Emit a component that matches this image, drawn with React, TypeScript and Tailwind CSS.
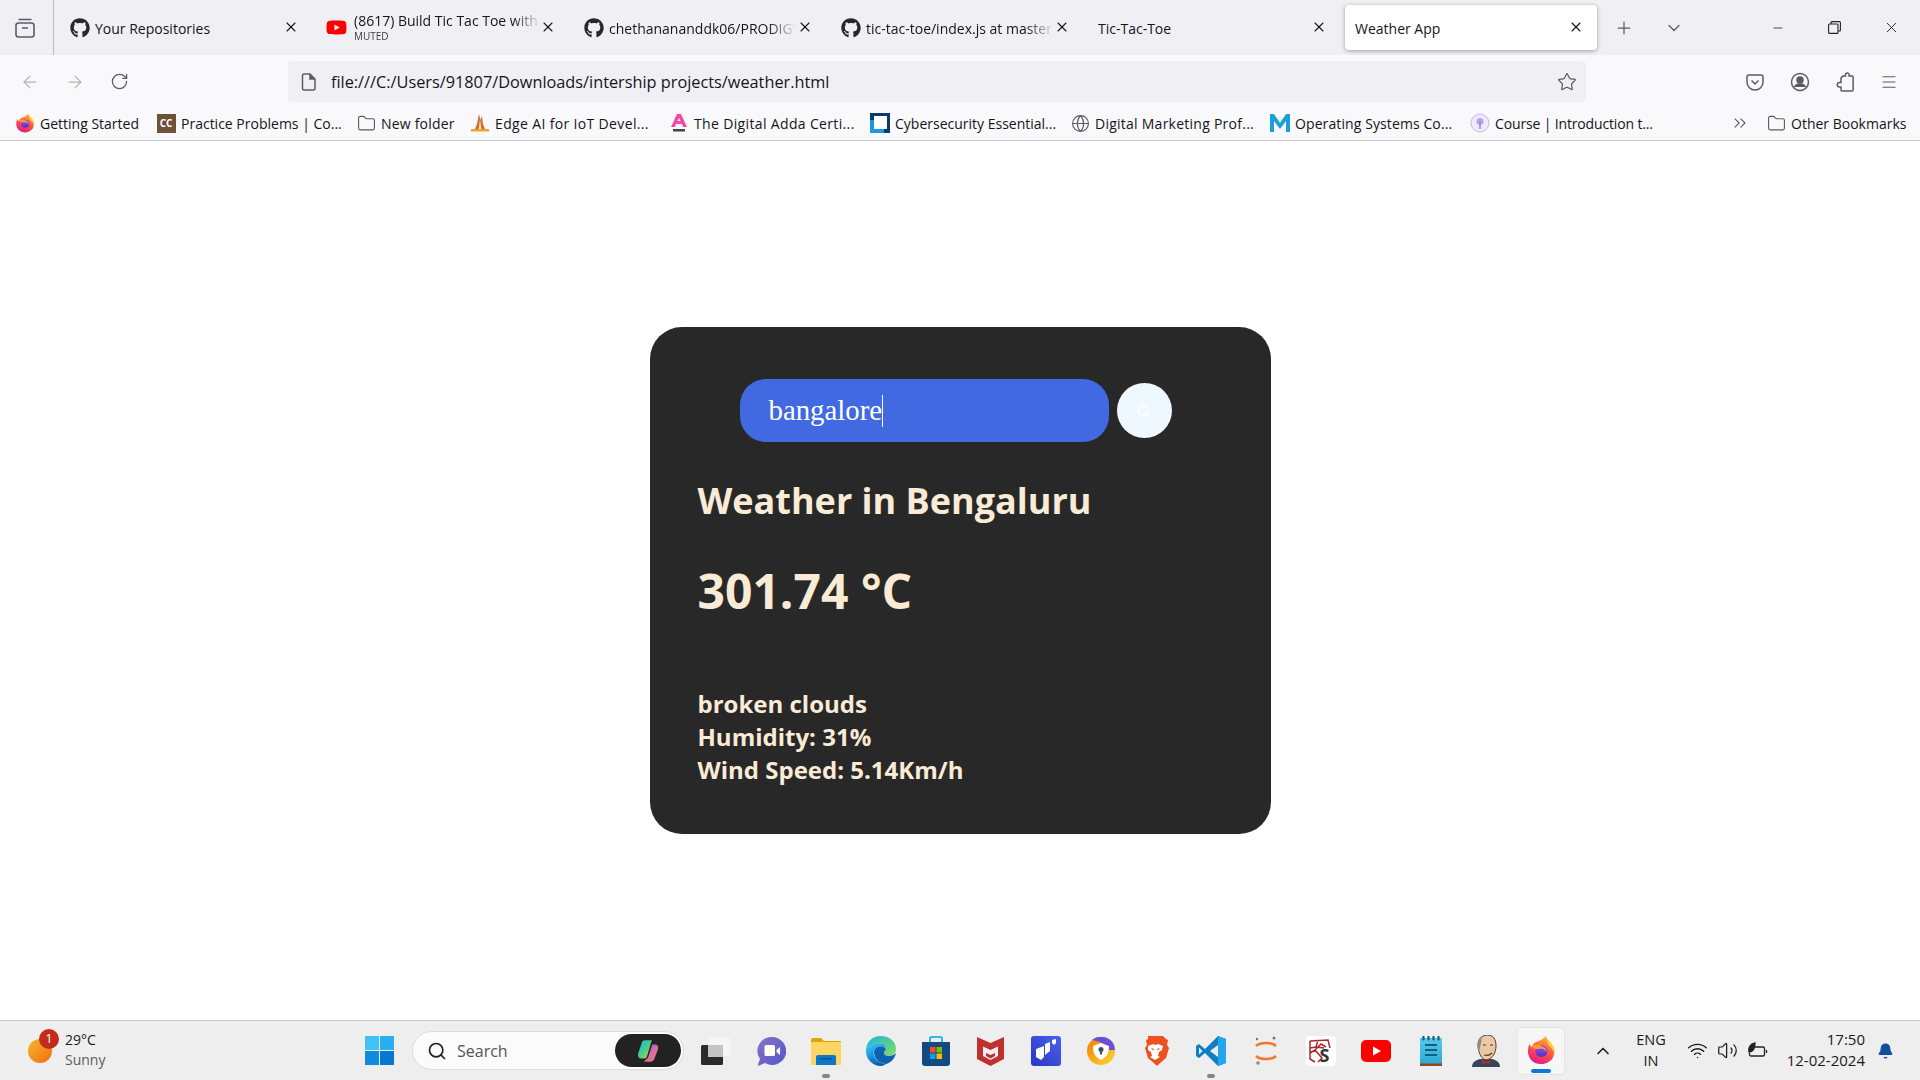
import { ArrowLeft, ArrowRight, RotateCw, Star, Menu, Folder, Globe, ChevronsRight, Search, ChevronUp, X, Minus, Plus, ChevronDown, Volume2, Wifi, Bell } from 'lucide-react';
import { FaGithub, FaYoutube } from 'react-icons/fa';
import { ReactNode } from 'react';

/* browser chrome data */
const tabs = [
  { title: 'Your Repositories', icon: 'github', textW: 'w-[180px]', fade: false },
  { title: '(8617) Build Tic Tac Toe with JavaScript', icon: 'youtube', textW: 'w-[187px]', fade: true, muted: true },
  { title: 'chethanananddk06/PRODIGY_WD_03', icon: 'github', textW: 'w-[187px]', fade: true },
  { title: 'tic-tac-toe/index.js at master', icon: 'github', textW: 'w-[188px]', fade: true },
  { title: 'Tic-Tac-Toe', icon: '', textW: 'w-[180px]', fade: false },
];

function FirefoxIcon({ size = 20, id }: { size?: number; id: string }) {
  return (
    <svg width={size} height={size} viewBox="0 0 32 32">
      <defs>
        <linearGradient id={`${id}a`} x1="0.7" y1="0" x2="0.3" y2="1">
          <stop offset="0" stopColor="#ffbd2e" />
          <stop offset="0.45" stopColor="#ff5f3a" />
          <stop offset="1" stopColor="#e31587" />
        </linearGradient>
        <linearGradient id={`${id}b`} x1="0.5" y1="0" x2="0.5" y2="1">
          <stop offset="0" stopColor="#9059ff" />
          <stop offset="1" stopColor="#5b2bc4" />
        </linearGradient>
      </defs>
      <path d="M21 1c1 3 3 5 6 8 3 4 4 8 3 11-1 7-7 11-14 11C8 31 2 25 2 17c0-3 1-6 2-8 0 2 1 3 2 4 1-3 3-5 6-6 3-1 7-3 9-6z" fill={`url(#${id}a)`} />
      <path d="M21 1c1 3 3 5 6 8 3 4 4 8 3 11-1-4-3-7-6-9-1-4-2-7-3-10z" fill="#ffd02e" />
      <circle cx="16.500" cy="17" r="6.500" fill={`url(#${id}b)`} />
      <path d="M6 12c3-2 8-2 11 0 3 1 5 3 5 6-2-3-5-4-8-3-3 0-6 0-8-3z" fill="#ff9a2e" />
    </svg>
  );
}

function TaskSlot({ children }: { children: ReactNode }) {
  return <div className="w-[55px] h-[59px] flex items-center justify-center relative">{children}</div>;
}

function Dot() {
  return <div className="absolute left-1/2 -translate-x-1/2 bottom-[2px] w-[8px] h-[4px] rounded-full bg-[#858585]" />;
}

function Bookmark({ icon, label, className, labelClass = '' }: { icon: ReactNode; label: string; className: string; labelClass?: string }) {
  return (
    <div className={`flex items-center shrink-0 ${className}`}>
      <div className="w-[20px] h-[20px] flex items-center justify-center shrink-0">{icon}</div>
      <span className={`ml-[5px] whitespace-nowrap ${labelClass}`}>{label}</span>
    </div>
  );
}

export default function App() {
  return (
    <div className="w-[1920px] h-[1080px] flex flex-col bg-white overflow-hidden font-['Open_Sans',sans-serif]">
      {/* Tab strip */}
      <div className="h-[55px] bg-[#f0f0f4] flex items-center text-[14px] text-[#15141a] shrink-0">
        <div className="w-[54px] h-[55px] border-r border-[#bcbcc2] pl-[15px] flex items-center shrink-0">
          <svg width="20" height="20" viewBox="0 0 20 20" fill="none" stroke="#5b5b66" strokeWidth="1.6">
            <rect x="1" y="5" width="18" height="14" rx="2.500" />
            <path d="M3.500 1.500h13M7 10h6" />
          </svg>
        </div>
        <div className="w-[6px]" />
        {tabs.map((tab) => (
          <div key={tab.title} className="w-[257px] h-[55px] pl-[10px] flex items-center relative shrink-0">
            {tab.icon === 'github' && <FaGithub className="w-[20px] h-[20px] text-[#24292f] mr-[5px] shrink-0" />}
            {tab.icon === 'youtube' && <FaYoutube className="w-[21px] h-[21px] text-[#f00] -ml-[1px] mr-[7px] shrink-0" />}
            {tab.muted ? (
              <div className={`${tab.textW} overflow-hidden -mt-[2px] [mask-image:linear-gradient(to_right,black_85%,transparent)]`}>
                <div className="whitespace-nowrap leading-[19px]">{tab.title}</div>
                <div className="text-[10px] leading-[13px] text-[#3b3b42]">MUTED</div>
              </div>
            ) : (
              <div className={`${tab.textW} mt-[2px] overflow-hidden whitespace-nowrap ${tab.fade ? '[mask-image:linear-gradient(to_right,black_85%,transparent)]' : ''}`}>
                {tab.title}
              </div>
            )}
            <X className="absolute left-[223px] top-[19px] w-[16px] h-[16px] text-[#15141a]" strokeWidth={1.6} />
          </div>
        ))}
        {/* active tab */}
        <div className="w-[252px] h-[45px] bg-white rounded-[4px] shadow-[0_1px_4px_rgba(0,0,0,0.35)] pl-[10px] flex items-center relative shrink-0">
          <span className="mt-[2px]">Weather App</span>
          <X className="absolute left-[223px] top-[14px] w-[16px] h-[16px]" strokeWidth={1.6} />
        </div>
        <Plus className="ml-[17px] w-[20px] h-[20px] text-[#5b5b66]" strokeWidth={1.5} />
        <ChevronDown className="ml-[30px] w-[20px] h-[20px] text-[#5b5b66]" strokeWidth={1.5} />
        <Minus className="ml-[87px] w-[14px] h-[14px] text-[#222]" strokeWidth={1.4} />
        <svg className="ml-[43px]" width="13" height="13" viewBox="0 0 13 13" fill="none" stroke="#222" strokeWidth="1.100">
          <rect x="0.600" y="3" width="9.400" height="9.400" rx="1" />
          <path d="M3 3V1.600a1 1 0 0 1 1-1h7.400a1 1 0 0 1 1 1V9a1 1 0 0 1-1 1H10" />
        </svg>
        <X className="ml-[42px] w-[17px] h-[17px] text-[#222]" strokeWidth={1.3} />
      </div>

      {/* Nav toolbar */}
      <div className="h-[53px] bg-[#f9f9fb] flex items-center shrink-0 text-[#5b5b66]">
        <ArrowLeft className="ml-[20px] w-[20px] h-[20px] text-[#b4b4b9]" strokeWidth={1.5} />
        <ArrowRight className="ml-[25px] w-[20px] h-[20px] text-[#b4b4b9]" strokeWidth={1.5} />
        <RotateCw className="ml-[25px] w-[19px] h-[19px]" strokeWidth={1.6} />
        <div className="ml-[159px] w-[1298px] h-[41px] bg-[#f0f0f4] rounded-[4px] flex items-center relative">
          <svg className="ml-[13px]" width="16" height="18" viewBox="0 0 16 18" fill="none" stroke="#5b5b66" strokeWidth="1.500">
            <path d="M3 1h6l5 5v9.500a1.500 1.500 0 0 1-1.500 1.500h-9.500A1.500 1.500 0 0 1 1.500 15.500v-13A1.500 1.500 0 0 1 3 1z" />
            <path d="M9 1v5h5" fill="#5b5b66" />
          </svg>
          <span className="ml-[14px] mt-[2px] text-[16.300px] text-[#15141a] whitespace-nowrap">file:///C:/Users/91807/Downloads/intership projects/weather.html</span>
          <Star className="absolute right-[9px] top-[11px] w-[20px] h-[20px]" strokeWidth={1.5} />
        </div>
        <svg className="ml-[160px]" width="18" height="18" viewBox="0 0 18 18" fill="none" stroke="#5b5b66" strokeWidth="1.500">
          <path d="M3 2h12a2 2 0 0 1 2 2v5a8 8 0 0 1-16 0V4a2 2 0 0 1 2-2z" />
          <path d="M5.500 7.500 9 11l3.500-3.500" />
        </svg>
        <svg className="ml-[26px]" width="20" height="20" viewBox="0 0 20 20" fill="none" stroke="#5b5b66" strokeWidth="1.500">
          <circle cx="10" cy="10" r="8.500" />
          <circle cx="10" cy="8" r="3" fill="#5b5b66" />
          <path d="M4.500 15c1-2 3-3 5.500-3s4.500 1 5.500 3" fill="#5b5b66" />
        </svg>
        <svg className="ml-[26px]" width="18" height="20" viewBox="0 0 18 20" fill="none" stroke="#5b5b66" strokeWidth="1.500">
          <path d="M7 4h2.500V2.800a1.800 1.800 0 0 1 3.600 0V4h3a1 1 0 0 1 1 1v13a1 1 0 0 1-1 1H6a1 1 0 0 1-1-1v-3H3.500a2 2 0 0 1 0-4.500H5V8a4 4 0 0 1 2-4z" />
        </svg>
        <Menu className="ml-[26px] w-[18px] h-[18px]" strokeWidth={1.5} />
      </div>

      {/* Bookmarks */}
      <div className="h-[33px] bg-[#f9f9fb] border-b border-[#c8c8cc] pb-[2px] flex items-center text-[14px] text-[#15141a] shrink-0 relative">
        <div className="flex items-center pl-[15px]">
          <Bookmark className="w-[141px]" icon={<FirefoxIcon id="bm" />} label="Getting Started" />
          <Bookmark className="w-[200px]" label="Practice Problems | Co..." icon={
            <div className="w-[19px] h-[19px] bg-[#6f5138] flex items-center justify-center text-white text-[10px] font-bold">CC</div>
          } />
          <Bookmark className="w-[114px]" labelClass="tracking-[0.2px]" icon={<Folder className="w-[19px] h-[19px] text-[#5b5b66]" strokeWidth={1.4} />} label="New folder" />
          <Bookmark className="w-[199px]" labelClass="tracking-[0.35px]" label="Edge AI for IoT Devel..." icon={
            <svg width="20" height="20" viewBox="0 0 20 20">
              <path d="M9 1l1.500 6 1.500-4 1 8 2 5H5l2-5z" fill="#c9742a" />
              <path d="M10 6l1 10H9z" fill="#fff" />
              <rect x="1" y="16" width="18" height="2.500" fill="#f0a030" />
            </svg>
          } />
          <Bookmark className="w-[201px]" labelClass="tracking-[0.35px]" label="The Digital Adda Certi..." icon={
            <svg width="20" height="20" viewBox="0 0 20 20">
              <path d="M8 1h4l6 13h-4l-1-3H7l-1 3H2z" fill="#f04aa5" />
              <path d="M8.500 8h3L10 5z" fill="#fff" />
              <rect x="4" y="16" width="12" height="2.500" fill="#444" />
            </svg>
          } />
          <Bookmark className="w-[200px]" label="Cybersecurity Essential..." icon={
            <svg width="20" height="20" viewBox="0 0 20 20">
              <rect width="20" height="20" fill="#0b3a6f" />
              <rect x="4" y="3" width="13" height="13" fill="#fff" />
              <path d="M0 7h4v9h10v4H0z" fill="#1c9ad6" />
            </svg>
          } />
          <Bookmark className="w-[200px]" labelClass="tracking-[0.25px]" icon={<Globe className="w-[19px] h-[19px] text-[#5b5b66]" strokeWidth={1.4} />} label="Digital Marketing Prof..." />
          <Bookmark className="w-[200px]" labelClass="tracking-[0.1px]" label="Operating Systems Co..." icon={
            <svg width="20" height="20" viewBox="0 0 20 20">
              <path d="M0 19V1h4l6 9 6-9h4v18h-4V8l-6 8-6-8v11z" fill="#1a9fd8" />
            </svg>
          } />
          <Bookmark className="w-[200px]" labelClass="tracking-[-0.15px]" label="Course | Introduction t..." icon={
            <svg width="20" height="20" viewBox="0 0 20 20">
              <circle cx="10" cy="10" r="9" fill="#efe8ff" stroke="#c9b8f0" />
              <circle cx="10" cy="8.500" r="3.500" fill="#b9a5e6" />
              <path d="M10 8v8" stroke="#9d86d8" strokeWidth="1.500" />
            </svg>
          } />
        </div>
        <ChevronsRight className="absolute left-[1730px] top-[5px] w-[20px] h-[20px] text-[#5b5b66]" strokeWidth={1.3} />
        <div className="absolute left-[1766px] top-[5px]">
          <Bookmark className="" icon={<Folder className="w-[19px] h-[19px] text-[#5b5b66]" strokeWidth={1.4} />} label="Other Bookmarks" />
        </div>
      </div>

      {/* Page */}
      <div className="flex-1 bg-white flex items-center justify-center">
        <div className="w-[621px] h-[507px] rounded-[32px] bg-[#282828] px-[48px] pt-[52px] text-[#faebd7] font-bold">
          <div className="flex items-center ml-[42px] gap-[8px]">
            <div className="w-[369px] h-[63px] rounded-[26px] bg-[#4169e1] pl-[29px] flex items-center">
              <span className="font-['Liberation_Serif',serif] font-normal text-[28.800px] text-white">bangalore</span>
              <span className="w-px h-[32px] bg-white" />
            </div>
            <div className="w-[55px] h-[55px] rounded-full bg-[#f0f8ff] flex items-center justify-center">
              <Search className="w-[14px] h-[14px] text-white" strokeWidth={2.500} />
            </div>
          </div>
          <h1 className="mt-[35px] text-[36px] leading-[48px]">Weather in Bengaluru</h1>
          <div className="mt-[34px] text-[48px] leading-[63px]">301.74 °C</div>
          <div className="mt-[65px] text-[24px] leading-[33px]">
            <div>broken clouds</div>
            <div>Humidity: 31%</div>
            <div>Wind Speed: 5.14Km/h</div>
          </div>
        </div>
      </div>

      {/* Taskbar */}
      <div className="h-[60px] bg-[#eeeeee] border-t border-[#c8c8c8] flex items-center shrink-0 text-[14px] text-[#1a1a1a] relative">
        <div className="ml-[28px] w-[24px] h-[24px] rounded-full bg-gradient-to-br from-[#f5b62a] to-[#f06a10] relative shrink-0">
          <div className="absolute -top-[10px] left-[11px] w-[20px] h-[20px] rounded-full bg-[#c42b1c] text-white text-[13px] flex items-center justify-center">1</div>
        </div>
        <div className="ml-[13px] -mt-[2px] w-[60px] leading-[20px] shrink-0">
          <div>29°C</div>
          <div className="text-[#5d5d5d]">Sunny</div>
        </div>
        <div className="ml-[240px] grid grid-cols-2 gap-[1px] w-[29px] h-[29px] shrink-0">
          <div className="bg-[#3ec3f5]" />
          <div className="bg-[#2aaeee]" />
          <div className="bg-[#0f8ae0]" />
          <div className="bg-[#0678d4]" />
        </div>
        <div className="ml-[18px] w-[272px] h-[39px] rounded-full bg-[#fbfbfb] border border-[#dcdcdc] flex items-center pl-[14px] shrink-0">
          <Search className="w-[20px] h-[20px] text-[#222]" strokeWidth={2} />
          <span className="ml-[10px] text-[16px] text-[#555]">Search</span>
          <div className="ml-auto mr-[2px] w-[66px] h-[33px] rounded-full bg-[#222] flex items-center justify-center">
            <svg width="26" height="26" viewBox="0 0 24 24">
              <defs>
                <linearGradient id="cop1" x1="0" y1="0" x2="1" y2="1">
                  <stop offset="0" stopColor="#1fb5ee" />
                  <stop offset="0.5" stopColor="#3fd08a" />
                  <stop offset="1" stopColor="#ffc02e" />
                </linearGradient>
                <linearGradient id="cop2" x1="0" y1="0" x2="1" y2="1">
                  <stop offset="0" stopColor="#a45ee5" />
                  <stop offset="1" stopColor="#ff7a6a" />
                </linearGradient>
              </defs>
              <path d="M16 6h2.500c2.500 0 3.500 2.500 2.500 5l-3 8c-1 2-2 3-4 3H8l4-4z" fill="url(#cop2)" />
              <path d="M9 2h6.500L11 17c-.5 1.500-1.500 2-3 2H6c-3 0-3.500-3-3-5l3-9c.5-2 1.500-3 3-3z" fill="url(#cop1)" />
            </svg>
          </div>
        </div>
        {/* pinned apps */}
        <div className="ml-[4px] flex items-center shrink-0">
          <TaskSlot>
            <svg width="30" height="28" viewBox="0 0 30 28">
              <rect x="7" y="0" width="23" height="20" rx="1.500" fill="#f5f5f5" stroke="#e0e0e0" strokeWidth="0.500" />
              <rect x="0" y="8" width="22" height="20" rx="1.500" fill="#2b2b2b" />
              <rect x="7" y="8" width="15" height="12" fill="#c4c4c4" />
            </svg>
          </TaskSlot>
          <TaskSlot>
            <svg width="30" height="30" viewBox="0 0 30 30">
              <defs>
                <linearGradient id="mt1" x1="0" y1="0" x2="1" y2="1">
                  <stop offset="0" stopColor="#8a70c8" />
                  <stop offset="1" stopColor="#5058c8" />
                </linearGradient>
              </defs>
              <path d="M16 1a14 14 0 1 1-7 26l-6 2.500c-1 .3-1.300-.3-1-1l2-5.500A14 14 0 0 1 16 1z" fill="url(#mt1)" />
              <rect x="8.500" y="9" width="10.500" height="11" rx="1.500" fill="#fff" />
              <path d="M20.500 14l3.500-3v8l-3.500-3z" fill="#fff" />
            </svg>
          </TaskSlot>
          <TaskSlot>
            <svg width="30" height="28" viewBox="0 0 30 28">
              <path d="M0 3a2 2 0 0 1 2-2h8l3 3h17v24H0z" fill="#e0a400" />
              <rect x="0" y="5" width="30" height="23" fill="#fcd660" />
              <path d="M5 20a2 2 0 0 1 2-2h16a2 2 0 0 1 2 2v8H5z" fill="#0d78c8" />
              <rect x="9" y="21" width="12" height="1.500" fill="#0a4f8a" />
            </svg>
            <Dot />
          </TaskSlot>
          <TaskSlot>
            <svg width="30" height="30" viewBox="0 0 30 30">
              <defs>
                <linearGradient id="edge1" x1="0.2" y1="0.1" x2="0.6" y2="1">
                  <stop offset="0" stopColor="#35c1f1" />
                  <stop offset="0.6" stopColor="#1284d8" />
                  <stop offset="1" stopColor="#0c59a4" />
                </linearGradient>
                <linearGradient id="edge2" x1="0" y1="0" x2="1" y2="1">
                  <stop offset="0" stopColor="#1fb6d6" />
                  <stop offset="1" stopColor="#7fe060" />
                </linearGradient>
              </defs>
              <path d="M15 0c9 0 15 6 15 13 0 4-3 7-7 7-3 0-5-1-5-3 0-1 2-2 2-4 0-3-3-6-8-6C7 7 2 10 0 15 0 6 6 0 15 0z" fill="url(#edge2)" />
              <path d="M0 15c0-5 5-8 12-8 5 0 8 3 8 6-2-2-5-3-8-2-3 1-5 4-4 8 1 5 6 9 12 9-2 1-3 2-5 2C6 30 0 23 0 15z" fill="url(#edge1)" />
              <path d="M8 17c0-3 2-6 4-6 3-1 6 0 8 2 0 1-2 2-2 4 0 2 2 3 5 3s5-1 7-3c-1 5-5 10-10 11-6 0-11-4-12-11z" fill="#0c63b0" />
            </svg>
          </TaskSlot>
          <TaskSlot>
            <svg width="30" height="30" viewBox="0 0 30 30">
              <path d="M9 6V2.500A1.500 1.500 0 0 1 10.500 1h9A1.500 1.500 0 0 1 21 2.500V6" fill="none" stroke="#30b5ee" strokeWidth="2" />
              <path d="M1 6h28v21a3 3 0 0 1-3 3H4a3 3 0 0 1-3-3z" fill="#134a80" />
              <rect x="9" y="11" width="5.500" height="5.500" fill="#f25022" />
              <rect x="15.500" y="11" width="5.500" height="5.500" fill="#7fba00" />
              <rect x="9" y="17.500" width="5.500" height="5.500" fill="#00a4ef" />
              <rect x="15.500" y="17.500" width="5.500" height="5.500" fill="#ffb900" />
            </svg>
          </TaskSlot>
          <TaskSlot>
            <svg width="27" height="30" viewBox="0 0 27 30">
              <path d="M0 1l13.500 6L27 1v22L13.500 30 0 23z" fill="#c0302d" />
              <path d="M6 10.500l7.500 3.500L21 10.500V20l-7.500 4L6 20z" fill="#eeeeee" />
              <path d="M9 17l4.500 2 4.500-2v3l-4.500 2.500L9 20z" fill="#c0302d" />
            </svg>
          </TaskSlot>
          <TaskSlot>
            <svg width="30" height="30" viewBox="0 0 30 30">
              <defs>
                <linearGradient id="ln1" x1="0" y1="1" x2="1" y2="0">
                  <stop offset="0" stopColor="#2a35c4" />
                  <stop offset="1" stopColor="#4a62ee" />
                </linearGradient>
              </defs>
              <rect width="30" height="30" rx="3" fill="url(#ln1)" />
              <path d="M5 13l8-3v11l-3 3-5-3z" fill="#fff" />
              <path d="M14 8l5-2v9l-5 4z" fill="#fff" />
              <path d="M21 4l4-1v4l-2 2-2-2z" fill="#fff" />
            </svg>
          </TaskSlot>
          <TaskSlot>
            <svg width="28" height="28" viewBox="0 0 28 28">
              <defs>
                <linearGradient id="av1" x1="0" y1="0" x2="1" y2="1">
                  <stop offset="0" stopColor="#f57c00" />
                  <stop offset="1" stopColor="#fdd835" />
                </linearGradient>
              </defs>
              <circle cx="14" cy="14" r="14" fill="url(#av1)" />
              <path d="M5 3a14 14 0 0 1 23 10h-7C19 7 12 4 5 3z" fill="#6b4fd8" />
              <path d="M6 9c3-1 5-2 8-3 3 1 5 2 8 3 0 7-2 11-8 14-6-3-8-7-8-14z" fill="#fff" />
              <circle cx="14" cy="12.500" r="2.500" fill="#3d4a5c" />
              <rect x="13" y="13" width="2" height="4.500" fill="#3d4a5c" />
            </svg>
          </TaskSlot>
          <TaskSlot>
            <svg width="27" height="30" viewBox="0 0 27 30">
              <path d="M6 0h15l3 3 2 1-1 5 2 3-3 10-7 6-2 2-2-2-7-6-3-10 2-3-1-5 2-1z" fill="#f0501f" />
              <path d="M6 10l5-2 2.500 1 2.500-1 5 2-1 4-3 2-1 4 2 1-5 3-5-3 2-1-1-4-3-2z" fill="#fff" />
              <path d="M9 12l3 1-1 1.500zM18 12l-3 1 1 1.500z" fill="#f0501f" />
            </svg>
          </TaskSlot>
          <TaskSlot>
            <svg width="30" height="30" viewBox="0 0 30 30">
              <path d="M22 0 9 13 3 8 0 10v10l3 2 6-5 13 13 8-3V3z" fill="#0f7fc4" />
              <path d="M22 0l8 3v24l-8 3z" fill="#24a6ee" />
              <path d="M22 9l-8 6 8 6z" fill="#eeeeee" />
              <path d="M3 11.500v7l3.500-3.500z" fill="#eeeeee" />
            </svg>
            <Dot />
          </TaskSlot>
          <TaskSlot>
            <svg width="22" height="30" viewBox="0 0 22 30" fill="none">
              <path d="M1 10c4-4 16-4 20 0" stroke="#f37726" strokeWidth="2.500" />
              <path d="M1 20c4 4 16 4 20 0" stroke="#f37726" strokeWidth="2.500" />
              <circle cx="2" cy="3" r="1.200" fill="#767677" />
              <circle cx="19" cy="2" r="1.500" fill="#767677" />
              <circle cx="3" cy="27" r="1.800" fill="#8a8a8a" />
            </svg>
          </TaskSlot>
          <TaskSlot>
            <div className="w-[30px] h-[30px] rounded-[4px] bg-white relative overflow-hidden">
              <svg width="30" height="30" viewBox="0 0 30 30" fill="none" stroke="#a82a2a" strokeWidth="1.500">
                <path d="M4 5l18-1 2 8M4 5v18l5 3M4 12l6-1 2-7M10 11l8 1M4 17l5-3 7 8-4 4M9 14l6-6 5 3" />
              </svg>
              <span className="absolute left-[14px] bottom-[1px] text-[18px] font-bold text-[#333] leading-[20px]">S</span>
            </div>
          </TaskSlot>
          <TaskSlot>
            <svg width="30" height="22" viewBox="0 0 30 22">
              <rect width="30" height="22" rx="5" fill="#f00" />
              <path d="M12 6.500l8 4.500-8 4.500z" fill="#fff" />
            </svg>
          </TaskSlot>
          <TaskSlot>
            <svg width="22" height="30" viewBox="0 0 22 30">
              <defs>
                <linearGradient id="np1" x1="0" y1="0" x2="0" y2="1">
                  <stop offset="0" stopColor="#5ac8e8" />
                  <stop offset="1" stopColor="#2ea8d4" />
                </linearGradient>
              </defs>
              <rect y="2" width="22" height="26" fill="url(#np1)" />
              <rect y="27.500" width="22" height="2.500" fill="#8a4a1e" />
              <path d="M5 9h12M5 14h12M5 19h12" stroke="#0d5f80" strokeWidth="2" />
              <path d="M3.500 1v2.500M8.500 1v2.500M13.500 1v2.500M18.500 1v2.500" stroke="#0d5f80" strokeWidth="2.200" strokeLinecap="round" />
            </svg>
          </TaskSlot>
          <TaskSlot>
            <svg width="28" height="32" viewBox="0 0 28 32">
              <path d="M0 32c0-5 4-7 8-8h12c4 1 8 3 8 8z" fill="#33465a" />
              <path d="M10 25l4 2 4-2v4l-4-1-4 1z" fill="#c0282a" />
              <path d="M6 10C6 3 11 0 16 0s8 4 8 11c0 6-3 13-10 14-5-1-8-8-8-15z" fill="#ecc7a4" stroke="#4a3a30" strokeWidth="1" />
              <path d="M6 12C5 6 7 3 9 2c1 3 0 7-1 10l-1 5c-1-1-1-3-1-5z" fill="#8a8a8a" />
              <path d="M12 20c3 1 6 0 8-2" stroke="#4a3a30" strokeWidth="1.200" fill="none" />
              <path d="M11 10h3M18 10h3" stroke="#4a3a30" strokeWidth="1" />
            </svg>
          </TaskSlot>
          <TaskSlot>
            <div className="w-[48px] h-[48px] rounded-[4px] bg-[#f7f7f7] border border-[#e4e4e4] flex items-center justify-center relative">
              <div className="-mt-[2px]"><FirefoxIcon id="tb" size={30} /></div>
              <div className="absolute bottom-[1px] left-[13px] w-[20px] h-[4px] rounded-full bg-[#0f78d4]" />
            </div>
          </TaskSlot>
        </div>
        {/* tray */}
        <ChevronUp className="ml-[25px] w-[20px] h-[20px] text-[#222]" strokeWidth={2} />
        <div className="ml-[14px] -mt-[2px] w-[48px] text-center text-[14.500px] leading-[21px]">
          <div>ENG</div>
          <div>IN</div>
        </div>
        <Wifi className="ml-[12px] w-[21px] h-[21px]" strokeWidth={1.6} />
        <Volume2 className="ml-[9px] w-[21px] h-[21px]" strokeWidth={1.4} />
        {/* battery with leaf */}
        <svg className="ml-[9px]" width="21" height="18" viewBox="0 0 21 18" fill="none" stroke="#222" strokeWidth="1.300">
          <path d="M8 5h8a1.500 1.500 0 0 1 1.500 1.500v6a1.500 1.500 0 0 1-1.500 1.500H4a1.500 1.500 0 0 1-1.500-1.500V11" />
          <path d="M19.500 8v3" />
          <path d="M8 1C3 2 1 6 2 10c4 0 6-4 6-9z" fill="#222" />
        </svg>
        <div className="ml-auto mr-[55px] -mt-[2px] text-right text-[15px] leading-[21px]">
          <div>17:50</div>
          <div>12-02-2024</div>
        </div>
        <Bell className="absolute left-[1877px] top-[20px] w-[17px] h-[20px] text-[#0f4f9e]" fill="#0f4f9e" strokeWidth={1.5} />
      </div>
    </div>
  );
}
